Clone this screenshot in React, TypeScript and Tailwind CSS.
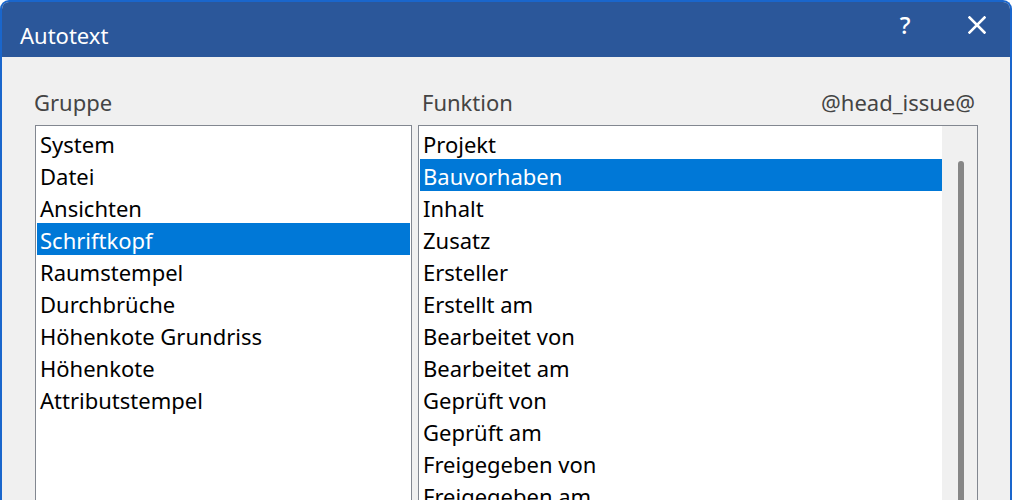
export default function App() {
  const groups = [
    "System",
    "Datei",
    "Ansichten",
    "Schriftkopf",
    "Raumstempel",
    "Durchbrüche",
    "Höhenkote Grundriss",
    "Höhenkote",
    "Attributstempel",
  ];

  const functions = [
    "Projekt",
    "Bauvorhaben",
    "Inhalt",
    "Zusatz",
    "Ersteller",
    "Erstellt am",
    "Bearbeitet von",
    "Bearbeitet am",
    "Geprüft von",
    "Geprüft am",
    "Freigegeben von",
    "Freigegeben am",
  ];

  return (
    <div
      className="w-[1012px] h-[500px] overflow-hidden bg-white"
      style={{ fontFamily: '"Noto Sans", "Open Sans", sans-serif' }}
    >
      <div className="h-[520px] flex flex-col rounded-t-[9px] border-2 border-b-0 border-[#1a66cc] bg-[#f0f0f0] overflow-hidden">
        {/* Titelleiste */}
        <div className="h-[55px] shrink-0 bg-[#2b579a] flex items-start text-white">
          <div className="pl-[18px] pt-[20px] text-[22px] leading-[26px]">Autotext</div>
          <div className="ml-auto flex items-start pt-[8px]">
            <div className="w-[78px] text-center text-[24px] font-medium leading-[30px]">?</div>
            <div className="w-[66px] flex justify-center pt-[6px]">
              <svg width="18" height="18" viewBox="0 0 18 18">
                <path d="M1.5 1.5 L16.5 16.5 M16.5 1.5 L1.5 16.5" stroke="white" strokeWidth="2.6" strokeLinecap="square" />
              </svg>
            </div>
          </div>
        </div>

        {/* Inhalt */}
        <div className="flex gap-[6px] pl-[33px] pt-[30px]">
          <div className="flex flex-col w-[377px]">
            <div className="h-[38px] text-[22px] leading-[30px] text-[#444] -ml-[1px]">Gruppe</div>
            <div className="h-[420px] border border-[#828790] bg-white p-[1px]">
              {groups.map((g) => (
                <div
                  key={g}
                  className={
                    "h-[32px] pl-[3px] text-[22px] leading-[34px] " +
                    (g === "Schriftkopf" ? "bg-[#0078d7] text-white" : "text-black")
                  }
                >
                  {g}
                </div>
              ))}
            </div>
          </div>

          <div className="flex flex-col w-[560px]">
            <div className="h-[38px] flex text-[22px] leading-[30px] text-[#444] pl-[4px] pr-[3px]">
              <span>Funktion</span>
              <span className="ml-auto">@head_issue@</span>
            </div>
            <div className="h-[420px] border border-[#828790] bg-white flex">
              <div className="flex-1 p-[1px] pr-0">
                {functions.map((f) => (
                  <div
                    key={f}
                    className={
                      "h-[32px] pl-[3px] text-[22px] leading-[34px] " +
                      (f === "Bauvorhaben" ? "bg-[#0078d7] text-white" : "text-black")
                    }
                  >
                    {f}
                  </div>
                ))}
              </div>
              <div className="w-[35px] bg-[#f0f0f0] flex justify-center pt-[35px] pl-[2px]">
                <div className="w-[6px] h-[400px] rounded-t-[3px] bg-[#868686]" />
              </div>
            </div>
          </div>
        </div>
      </div>
    </div>
  );
}
